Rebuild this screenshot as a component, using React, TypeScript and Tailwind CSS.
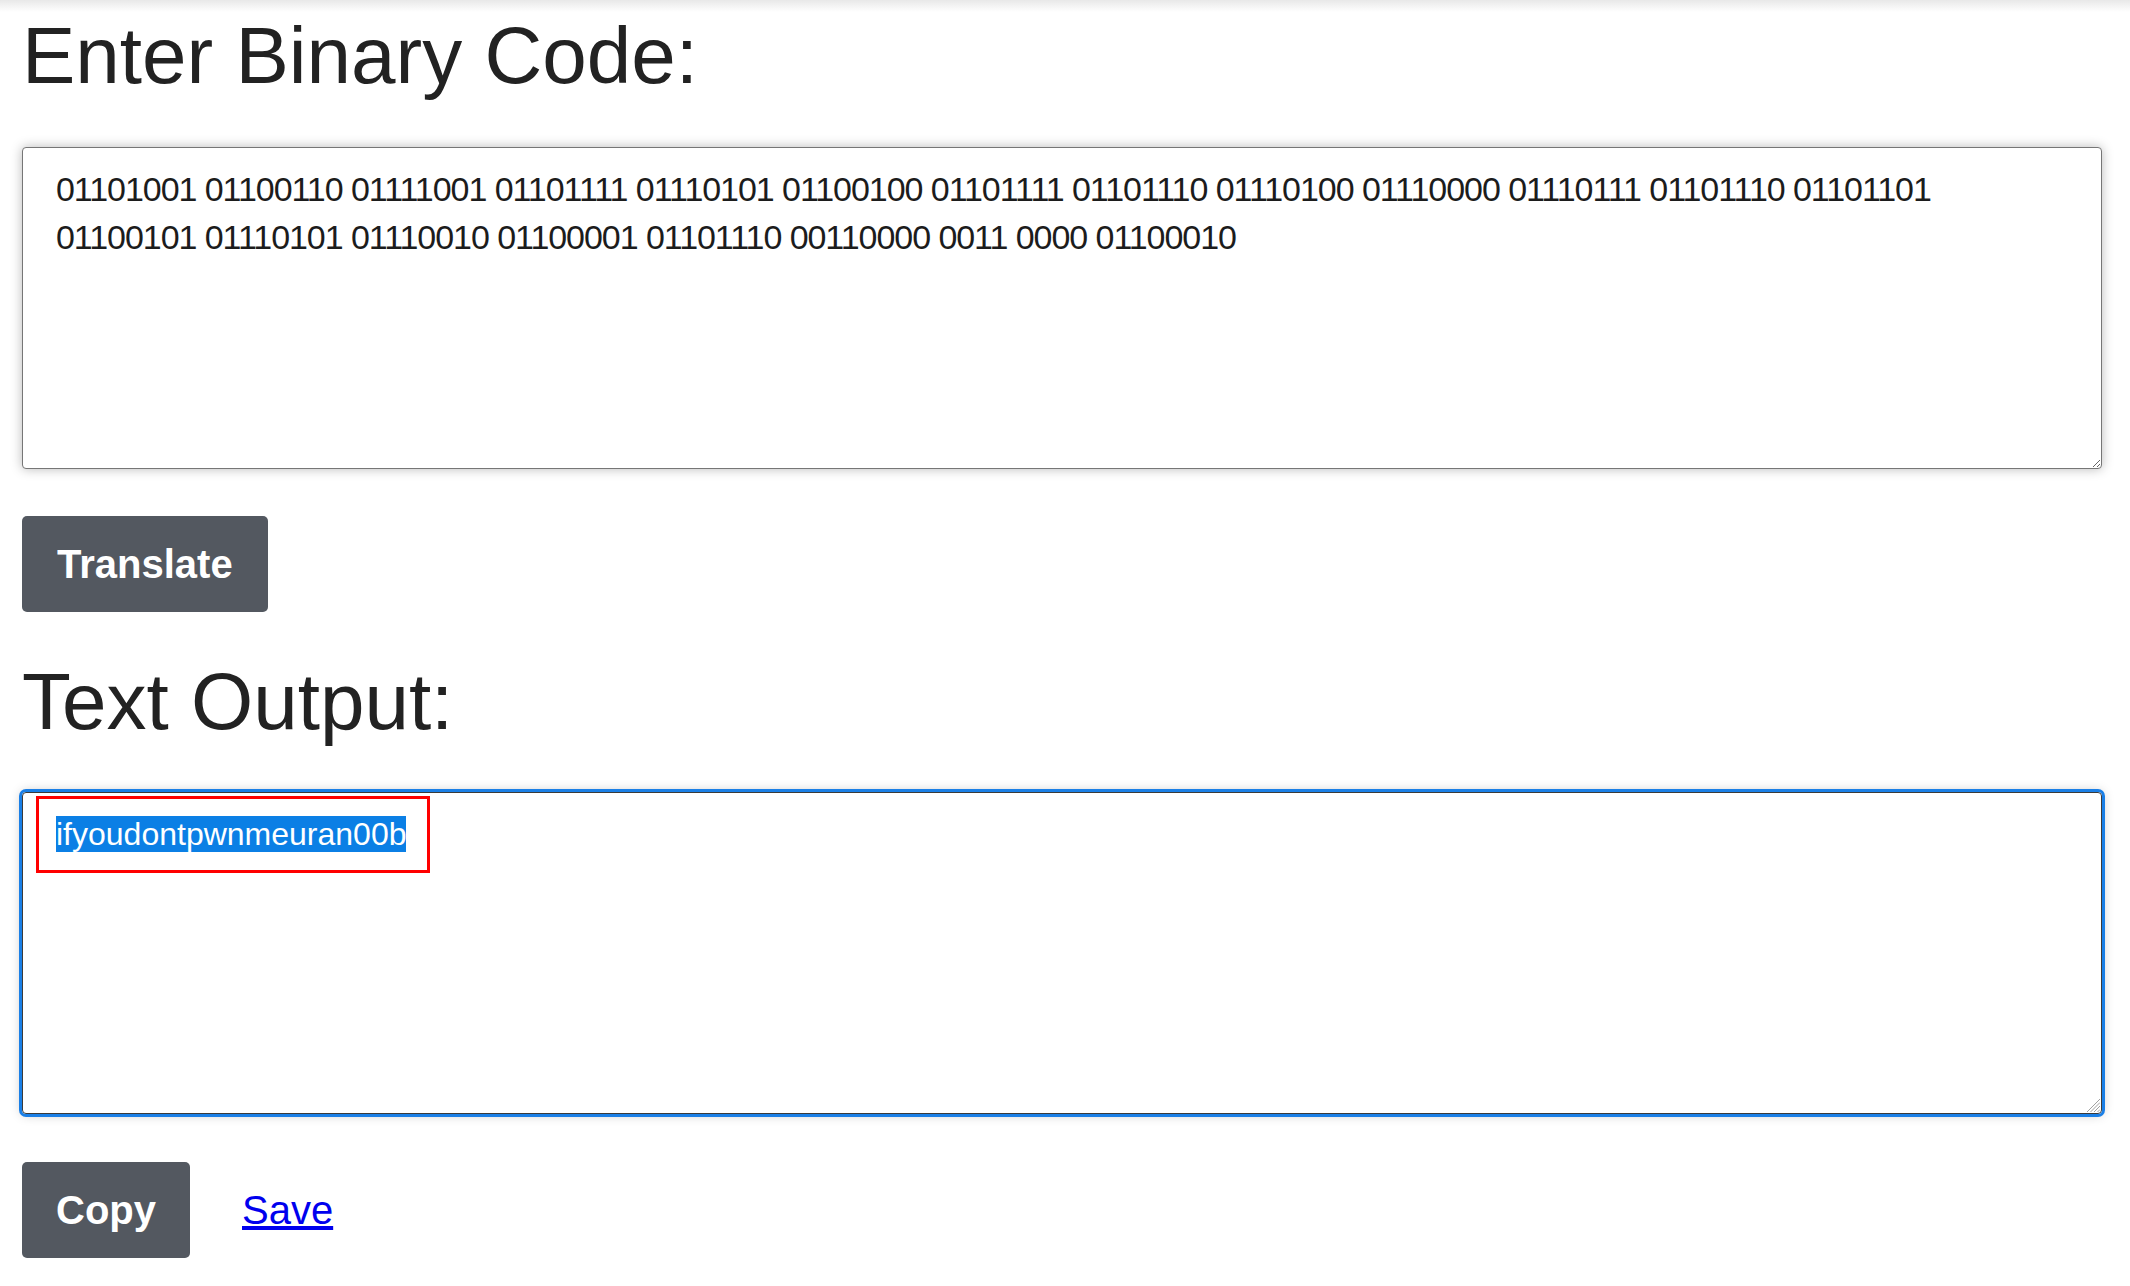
import React from "react";

const BIN1 =
  "01101001 01100110 01111001 01101111 01110101 01100100 01101111 01101110 01110100 01110000 01110111 01101110 01101101";
const BIN2 =
  "01100101 01110101 01110010 01100001 01101110 00110000 0011 0000 01100010";

function Grip() {
  return (
    <svg
      className="absolute bottom-[1px] right-[1px]"
      width="14"
      height="14"
      viewBox="0 0 14 14"
    >
      <line x1="14" y1="1" x2="1" y2="14" stroke="#a0a0a0" strokeWidth="1" />
      <line x1="14" y1="4.5" x2="4.5" y2="14" stroke="#a0a0a0" strokeWidth="1" />
      <line x1="14" y1="8" x2="8" y2="14" stroke="#a0a0a0" strokeWidth="1" />
      <line x1="14" y1="11.5" x2="11.5" y2="14" stroke="#a0a0a0" strokeWidth="1" />
    </svg>
  );
}

export default function App() {
  return (
    <div className="min-h-screen bg-white bg-[linear-gradient(to_bottom,#e8e8e8,#ffffff_12px)] pl-[22px] pr-[28px] pt-[8px] font-['Liberation_Sans',Arial,sans-serif] text-[#222222]">
      <h2 className="text-[80px] leading-[96px] font-normal">Enter Binary Code:</h2>

      <textarea
        className="mt-[43px] block h-[322px] w-full rounded-[4px] border border-[#767676] bg-white px-[33px] pt-[17px] font-['Liberation_Sans',Arial,sans-serif] text-[34px] leading-[48px] tracking-[-1.05px] text-[#1c1c1c] shadow-[0_0_12px_rgba(0,0,0,0.28)] outline-none"
        defaultValue={BIN1 + "\n" + BIN2}
        spellCheck={false}
      />

      <button className="mt-[47px] block rounded-[5px] bg-[#535860] px-[35px] py-[18px] text-[40px] font-bold leading-[60px] text-white">
        Translate
      </button>

      <h2 className="mt-[42px] text-[80px] leading-[96px] font-normal">Text Output:</h2>

      <div className="relative mt-[42px] h-[322px] rounded-[4px] border border-[#3a3a3a] bg-white pl-[33px] pt-[17px] text-[32px] leading-[48px] text-[#1c1c1c] shadow-[0_0_12px_rgba(0,0,0,0.28)] outline-[3px] outline-solid outline-[#1a7fe6]">
        <span className="bg-[#0b7fe5] text-white">ifyoudontpwnmeuran00b</span>
        <div className="absolute left-[13px] top-[3px] h-[77px] w-[394px] border-[3px] border-[#ff0000]" />
        <Grip />
      </div>

      <div className="mt-[48px] flex items-baseline gap-[52px]">
        <button className="rounded-[5px] bg-[#535860] px-[34px] py-[18px] text-[40px] font-bold leading-[60px] text-white">
          Copy
        </button>
        <a href="#" className="text-[40px] text-[#0000ee] underline">
          Save
        </a>
      </div>
    </div>
  );
}
